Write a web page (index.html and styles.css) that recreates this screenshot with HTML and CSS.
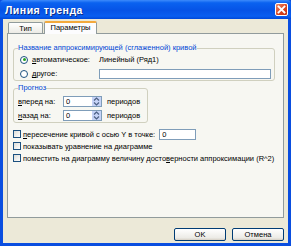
FILE: index.html
```html
<!DOCTYPE html>
<html>
<head>
<meta charset="utf-8">
<link rel="stylesheet" href="styles.css">
</head>
<body>
<div class="window">
  <div class="titlebar">
    <span class="title">Линия тренда</span>
    <span class="close"><svg width="9" height="9" viewBox="0 0 9 9"><path d="M1.5 1.5 L7.5 7.5 M7.5 1.5 L1.5 7.5" stroke="#fff" stroke-width="1.8" stroke-linecap="square"/></svg></span>
  </div>
  <div class="body">
    <div class="tabs">
      <div class="tab">Тип</div>
      <div class="tab active">Параметры</div>
    </div>
    <div class="panel">
      <fieldset class="group g1">
        <legend>Название аппроксимирующей (сглаженной) кривой</legend>
        <div class="row">
          <span class="radio checked"></span><span class="lbl w1"><u>а</u>втоматическое:</span><span class="val">Линейный (Ряд1)</span>
        </div>
        <div class="row">
          <span class="radio"></span><span class="lbl w1"><u>д</u>ругое:</span><span class="textbox"></span>
        </div>
      </fieldset>
      <fieldset class="group g2">
        <legend>Прогноз</legend>
        <div class="row">
          <span class="lbl w2"><u>в</u>перед на:</span><span class="spin"><span class="num">0</span><span class="arrows"><svg width="7" height="9" viewBox="0 0 7 9"><path d="M1 3.5 L3.5 1 L6 3.5 M1 5.5 L3.5 8 L6 5.5" stroke="#4d6185" stroke-width="1.2" fill="none"/></svg></span></span><span class="per">периодов</span>
        </div>
        <div class="row">
          <span class="lbl w2"><u>н</u>азад на:</span><span class="spin"><span class="num">0</span><span class="arrows"><svg width="7" height="9" viewBox="0 0 7 9"><path d="M1 3.5 L3.5 1 L6 3.5 M1 5.5 L3.5 8 L6 5.5" stroke="#4d6185" stroke-width="1.2" fill="none"/></svg></span></span><span class="per">периодов</span>
        </div>
      </fieldset>
      <div class="checks">
        <div class="crow"><span class="cbox"></span><span><u>п</u>ересечение кривой с осью Y в точке:</span><span class="smallbox">0</span></div>
        <div class="crow"><span class="cbox"></span><span>показывать <u>у</u>равнение на диаграмме</span></div>
        <div class="crow"><span class="cbox"></span><span>поместить на диаграмму величину досто<u>в</u>ерности аппроксимации (R^2)</span></div>
      </div>
    </div>
    <div class="buttons">
      <div class="btn">OK</div>
      <div class="btn">Отмена</div>
    </div>
  </div>
</div>
</body>
</html>
```
FILE: styles.css
```css
html, body {
  margin: 0;
  padding: 0;
  width: 291px;
  height: 246px;
  overflow: hidden;
  font-family: "Liberation Sans", sans-serif;
}
.window {
  width: 291px;
  height: 246px;
  box-sizing: border-box;
  background: #0a4ee0;
  display: flex;
  flex-direction: column;
  padding: 0 3px 3px 3px;
}
.titlebar {
  height: 19px;
  margin: 0 -3px;
  background: linear-gradient(to bottom, #3d8bfb 0%, #0a62f0 15%, #0653e6 55%, #0a5ef0 85%, #0048d8 100%);
  display: flex;
  align-items: center;
  justify-content: space-between;
  padding: 0 3px 0 5px;
  border-radius: 4px 4px 0 0;
}
.title {
  color: #fff;
  font-family: "Liberation Sans", sans-serif;
  font-weight: bold;
  font-size: 10.5px;
  letter-spacing: 0.5px;
  text-shadow: 1px 1px 0 #0b2f8a;
}
.close {
  width: 13px;
  height: 13px;
  box-sizing: border-box;
  border: 1px solid #fff;
  border-radius: 2px;
  background: linear-gradient(to bottom right, #f08a6a, #d9401c 60%, #c23612);
  display: flex;
  align-items: center;
  justify-content: center;
}
.body {
  flex: 1;
  background: #ece9d8;
  display: flex;
  flex-direction: column;
  padding: 2px 4px 0 4px;
}
.tabs {
  display: flex;
  height: 12px;
  padding-left: 1px;
  align-items: flex-end;
}
.tab {
  font-size: 7.5px;
  height: 11px;
  line-height: 11px;
  box-sizing: border-box;
  border: 1px solid #919b9c;
  border-bottom: none;
  border-radius: 2px 2px 0 0;
  background: linear-gradient(to bottom, #fff, #ecebe5);
  padding: 0;
  color: #000;
  width: 35px;
  text-align: center;
}
.tab.active {
  height: 13px;
  margin-bottom: -1px;
  width: 53px;
  padding: 0;
  background: #fcfcfe;
  border-top: 2px solid #f3a93c;
  line-height: 10px;
  position: relative;
  z-index: 1;
  margin-left: 1px;
}
.panel {
  height: 185px;
  box-sizing: border-box;
  border: 1px solid #919b9c;
  background: #f7f7f2;
  padding: 10px 6px 0 5px;
  font-size: 7.5px;
  color: #000;
  white-space: nowrap;
}
.group {
  border: 1px solid #d0d0bf;
  border-radius: 3px;
  margin: 0;
  padding: 0 3px 3px 3px;
}
.group legend {
  color: #0046d5;
  font-size: 7.5px;
  padding: 0;
  margin-left: 1px;
  line-height: 8px;
}
.g1 {
  width: 259px;
  box-sizing: border-box;
  height: 37px;
}
.g2 {
  width: 135px;
  box-sizing: border-box;
  margin-top: 3px;
  height: 39px;
}
.g2 .row:first-of-type { margin-top: 3px; }
.row {
  display: flex;
  align-items: center;
  height: 13px;
  margin-top: 1px;
}
.radio {
  width: 8px;
  height: 8px;
  box-sizing: border-box;
  border: 1px solid #1c5180;
  border-radius: 50%;
  background: #fff;
  margin: 0 4px 0 3px;
  position: relative;
}
.radio.checked::after {
  content: "";
  position: absolute;
  left: 1.5px;
  top: 1.5px;
  width: 3px;
  height: 3px;
  border-radius: 50%;
  background: #21a121;
}
.lbl { flex-shrink: 0; }
.lbl.w1 { width: 67px; }
.lbl.w2 { width: 45px; margin-left: 1px; }
.textbox {
  width: 172px;
  height: 10px;
  box-sizing: border-box;
  border: 1px solid #7f9db9;
  background: #fff;
}
.spin {
  width: 39px;
  height: 11px;
  box-sizing: border-box;
  border: 1px solid #7f9db9;
  background: #fff;
  display: flex;
  justify-content: space-between;
  align-items: center;
}
.spin .num { padding-left: 2px; }
.arrows {
  width: 9px;
  height: 9px;
  background: #c6d3f7;
  display: flex;
  align-items: center;
  justify-content: center;
}
.per { margin-left: 5px; }
.checks {
  margin-top: 5px;
  display: flex;
  flex-direction: column;
}
.crow {
  display: flex;
  align-items: center;
  height: 12px;
}
.cbox {
  width: 8px;
  height: 8px;
  box-sizing: border-box;
  border: 1px solid #1c5180;
  background: linear-gradient(to bottom right, #dcdcd7, #fff);
  margin-right: 2px;
}
.smallbox {
  width: 37px;
  height: 11px;
  box-sizing: border-box;
  border: 1px solid #7f9db9;
  background: #fff;
  margin-left: 4px;
  padding-left: 2px;
  line-height: 9px;
}
.buttons {
  display: flex;
  justify-content: flex-end;
  gap: 6px;
  margin-top: 10px;
}
.btn {
  width: 52px;
  height: 13px;
  box-sizing: border-box;
  border: 1px solid #003c74;
  border-radius: 2px;
  background: linear-gradient(to bottom, #fff, #ecebe6 80%, #d6d0c5);
  font-size: 7.5px;
  text-align: center;
  line-height: 11px;
}
```
